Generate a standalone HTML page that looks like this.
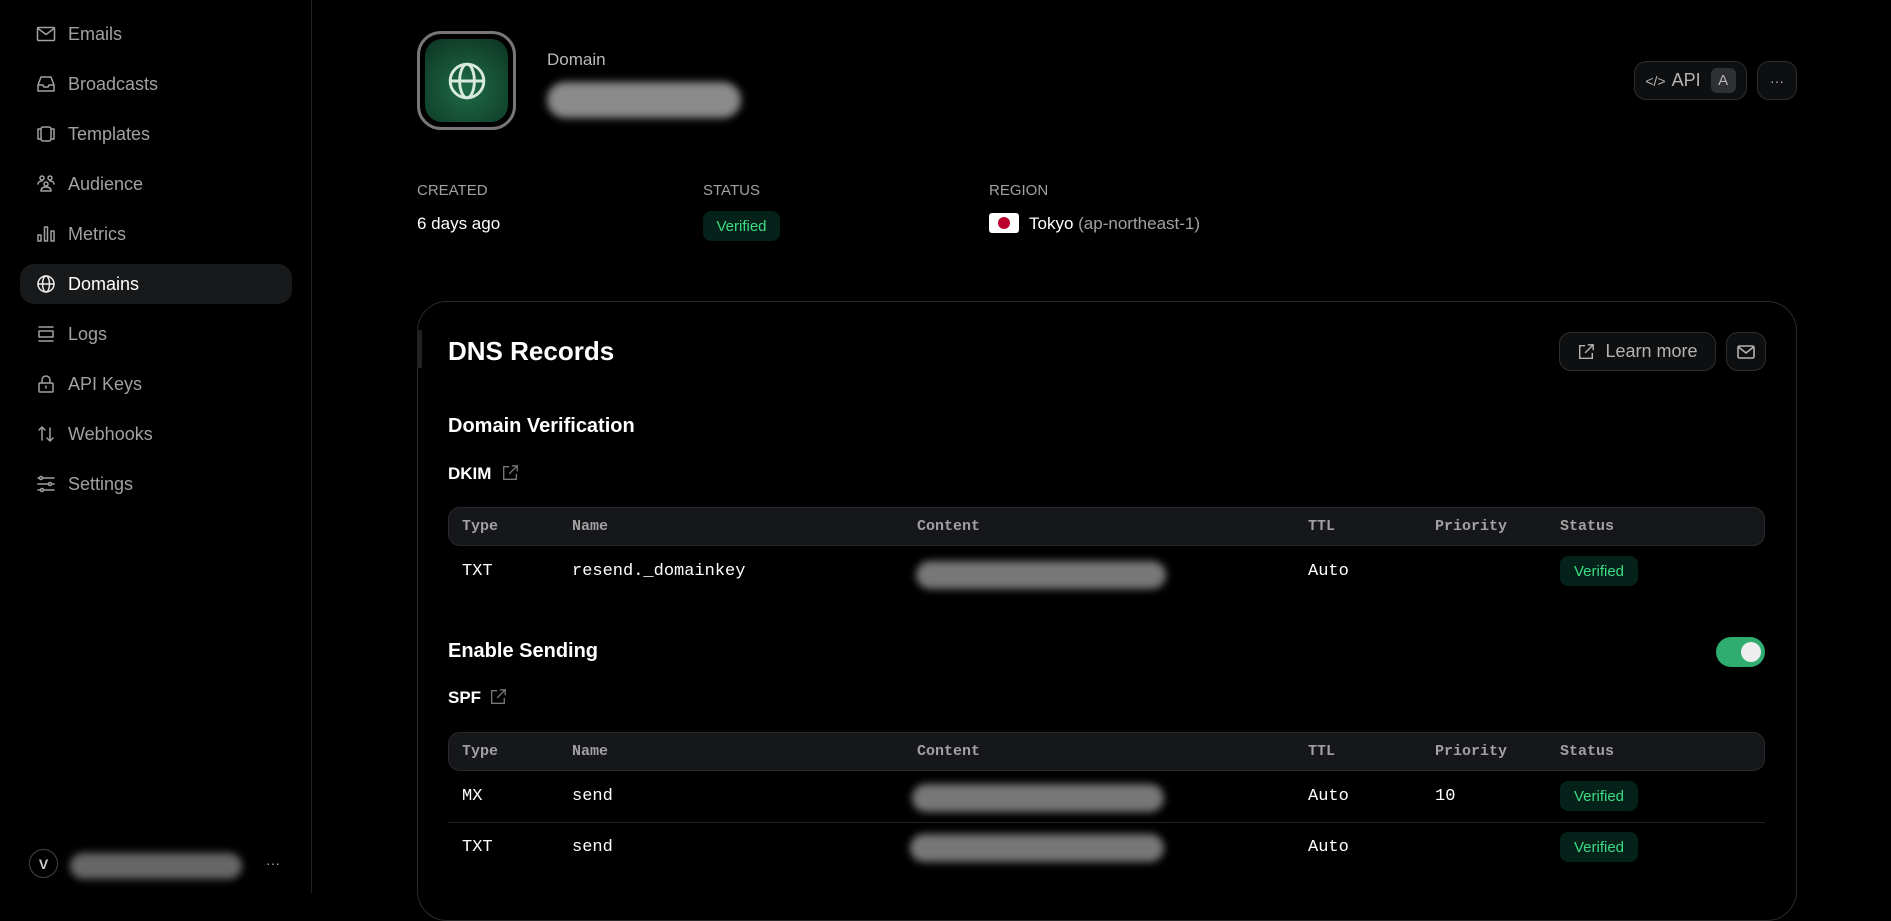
<!DOCTYPE html>
<html><head><meta charset="utf-8"><style>
*{box-sizing:border-box;margin:0;padding:0}
body{width:1891px;height:893px;background:#000;color:#ededed;font-family:"Liberation Sans",sans-serif;position:relative;overflow:hidden}
.a{position:absolute}
.side{left:0;top:0;width:312px;height:893px;border-right:1px solid #222}
.nav{position:absolute;left:20px;width:272px;height:40px;border-radius:14px;display:flex;align-items:center;padding-left:16px;font-size:18px;color:#a1a1a1}
.nav svg{width:20px;height:20px;margin-right:12px;fill:none;stroke:#a1a1a1;stroke-width:1.5;stroke-linecap:round;stroke-linejoin:round}
.nav.act{background:#18191b;color:#fff}
.nav.act svg{stroke:#eee}
.blur{background:#777;border-radius:20px;filter:blur(4px)}
.lbl{font-size:15px;color:#a1a1a1}
.val{font-size:17px;color:#fff}
.badge{background:#04221a;color:#3ddc84;border-radius:8px;font-size:15px;display:flex;align-items:center;justify-content:center}
.btn{border:1px solid #2e2e2e;background:#0e0f11;border-radius:12px;display:flex;align-items:center;justify-content:center;color:#b4b4b4;font-size:18px}
.thead{left:448px;width:1317px;height:39px;background:#16171a;border:1px solid #2a2a2a;border-radius:12px}
.mono{font-family:"Liberation Mono",monospace}
.th{font-size:15px;color:#a1a1a1;font-weight:bold}
.td{font-size:17px;color:#fff}
h3{position:absolute;font-weight:bold;color:#fff}
</style></head><body>
<div class="a side"></div>
<div class="nav" style="top:14px"><svg viewBox="0 0 20 20"><rect x="1.5" y="3.5" width="17" height="13" rx="1"/><path d="M2 4.5l8 6 8-6"/></svg>Emails</div>
<div class="nav" style="top:64px"><svg viewBox="0 0 20 20"><path d="M2 11l3-8h10l3 8v6H2z M2 11h5l1 2h4l1-2h5"/></svg>Broadcasts</div>
<div class="nav" style="top:114px"><svg viewBox="0 0 20 20"><rect x="5" y="3" width="10" height="14" rx="2"/><path d="M5 5H2v10h3M15 5h3v10h-3"/></svg>Templates</div>
<div class="nav" style="top:164px"><svg viewBox="0 0 20 20"><circle cx="6" cy="4" r="2"/><circle cx="14" cy="4" r="2"/><circle cx="10" cy="10" r="2"/><path d="M2 10c0-2 2-3 4-3M18 10c0-2-2-3-4-3M5 17c0-3 2-4 5-4s5 1 5 4z"/></svg>Audience</div>
<div class="nav" style="top:214px"><svg viewBox="0 0 20 20"><rect x="2" y="11" width="3" height="6"/><rect x="8.5" y="3" width="3" height="14"/><rect x="15" y="7" width="3" height="10"/></svg>Metrics</div>
<div class="nav act" style="top:264px"><svg viewBox="0 0 20 20"><circle cx="10" cy="10" r="8"/><ellipse cx="10" cy="10" rx="3.5" ry="8"/><path d="M2 10h16"/></svg>Domains</div>
<div class="nav" style="top:314px"><svg viewBox="0 0 20 20"><path d="M3 3h14M3 17h14"/><rect x="3" y="7" width="14" height="6"/></svg>Logs</div>
<div class="nav" style="top:364px"><svg viewBox="0 0 20 20"><rect x="3" y="9" width="14" height="9" rx="1"/><path d="M6 9V6a4 4 0 018 0v3M10 12v2"/></svg>API Keys</div>
<div class="nav" style="top:414px"><svg viewBox="0 0 20 20"><path d="M6 16V3M3 6l3-3 3 3M14 4v13M11 14l3 3 3-3"/></svg>Webhooks</div>
<div class="nav" style="top:464px"><svg viewBox="0 0 20 20"><path d="M2 4h16M2 10h16M2 16h16"/><circle cx="5" cy="4" r="1.5" fill="#000"/><circle cx="14" cy="10" r="1.5" fill="#000"/><circle cx="6" cy="16" r="1.5" fill="#000"/></svg>Settings</div>
<div class="a" style="left:29px;top:849px;width:29px;height:29px;border:1px solid #444;border-radius:50%;color:#ccc;font-size:14px;font-weight:bold;display:flex;align-items:center;justify-content:center">V</div>
<div class="a blur" style="left:70px;top:853px;width:172px;height:26px;background:#666"></div>
<div class="a" style="left:266px;top:855px;color:#aaa;font-size:14px">···</div>

<div class="a" style="left:417px;top:31px;width:99px;height:99px;border:3px solid #777;border-radius:24px;padding:5px;background:#000">
<div style="width:100%;height:100%;border-radius:17px;background:radial-gradient(circle at 50% 60%,#1f6b47,#0c3322);display:flex;align-items:center;justify-content:center">
<svg width="42" height="42" viewBox="0 0 20 20" fill="none" stroke="#d8eadf" stroke-width="1.4"><circle cx="10" cy="10" r="8"/><ellipse cx="10" cy="10" rx="3.5" ry="8"/><path d="M2 10h16"/></svg></div></div>
<div class="a" style="left:547px;top:50px;font-size:17px;color:#bbb">Domain</div>
<div class="a blur" style="left:547px;top:82px;width:194px;height:36px;background:#8a8a8a"></div>

<div class="a btn" style="left:1634px;top:61px;width:113px;height:39px"><span style="font-size:14px;margin-right:6px">&lt;/&gt;</span>API<span style="margin-left:10px;background:#2e3033;border-radius:6px;width:25px;height:25px;font-size:15px;display:flex;align-items:center;justify-content:center">A</span></div>
<div class="a btn" style="left:1757px;top:61px;width:40px;height:39px;font-size:14px">···</div>

<div class="a lbl" style="left:417px;top:182px">CREATED</div>
<div class="a val" style="left:417px;top:214px">6 days ago</div>
<div class="a lbl" style="left:703px;top:182px">STATUS</div>
<div class="a badge" style="left:703px;top:211px;width:77px;height:30px">Verified</div>
<div class="a lbl" style="left:989px;top:182px">REGION</div>
<div class="a" style="left:989px;top:213px;width:30px;height:20px;background:#fff;border-radius:3px"><div style="position:absolute;left:9px;top:4px;width:12px;height:12px;border-radius:50%;background:#bc002d"></div></div>
<div class="a val" style="left:1029px;top:214px">Tokyo <span style="color:#a1a1a1">(ap-northeast-1)</span></div>

<div class="a" style="left:417px;top:301px;width:1380px;height:620px;border:1px solid #2a2a2a;border-radius:30px"></div>
<div class="a" style="left:417px;top:330px;width:5px;height:38px;background:#222;border-radius:2px"></div>
<h3 style="left:448px;top:336px;font-size:26px">DNS Records</h3>
<div class="a btn" style="left:1559px;top:332px;width:157px;height:39px"><svg width="18" height="18" viewBox="0 0 20 20" fill="none" stroke="#b4b4b4" stroke-width="1.6" style="margin-right:10px"><path d="M9 3H3v14h14v-6M12 2h6v6M18 2l-9 9"/></svg>Learn more</div>
<div class="a btn" style="left:1726px;top:332px;width:40px;height:39px"><svg width="20" height="20" viewBox="0 0 20 20" fill="none" stroke="#b4b4b4" stroke-width="1.6"><rect x="2" y="4" width="16" height="12" rx="1.5"/><path d="M2.5 5l7.5 6 7.5-6"/></svg></div>

<h3 style="left:448px;top:415px;font-size:20px">Domain Verification</h3>
<h3 style="left:448px;top:464px;font-size:17px">DKIM</h3>
<svg class="a" style="left:501px;top:464px" width="18" height="18" viewBox="0 0 20 20" fill="none" stroke="#777" stroke-width="1.5"><path d="M9 3H3v14h14v-6M12 2h6v6M18 2l-9 9"/></svg>
<div class="a thead" style="top:507px"></div>
<div class="a mono th" style="left:462px;top:518px">Type</div><div class="a mono th" style="left:572px;top:518px">Name</div><div class="a mono th" style="left:917px;top:518px">Content</div><div class="a mono th" style="left:1308px;top:518px">TTL</div><div class="a mono th" style="left:1435px;top:518px">Priority</div><div class="a mono th" style="left:1560px;top:518px">Status</div>
<div class="a mono td" style="left:462px;top:562px">TXT</div><div class="a mono td" style="left:572px;top:562px">resend._domainkey</div>
<div class="a blur" style="left:916px;top:561px;width:250px;height:28px"></div>
<div class="a mono td" style="left:1308px;top:562px">Auto</div>
<div class="a badge" style="left:1560px;top:556px;width:78px;height:30px">Verified</div>

<h3 style="left:448px;top:640px;font-size:20px">Enable Sending</h3>
<div class="a" style="left:1716px;top:637px;width:49px;height:30px;background:#2fac6f;border-radius:15px"><div style="position:absolute;right:4px;top:5px;width:20px;height:20px;border-radius:50%;background:#eee"></div></div>
<h3 style="left:448px;top:688px;font-size:17px">SPF</h3>
<svg class="a" style="left:489px;top:688px" width="18" height="18" viewBox="0 0 20 20" fill="none" stroke="#777" stroke-width="1.5"><path d="M9 3H3v14h14v-6M12 2h6v6M18 2l-9 9"/></svg>
<div class="a thead" style="top:732px"></div>
<div class="a mono th" style="left:462px;top:743px">Type</div><div class="a mono th" style="left:572px;top:743px">Name</div><div class="a mono th" style="left:917px;top:743px">Content</div><div class="a mono th" style="left:1308px;top:743px">TTL</div><div class="a mono th" style="left:1435px;top:743px">Priority</div><div class="a mono th" style="left:1560px;top:743px">Status</div>
<div class="a mono td" style="left:462px;top:787px">MX</div><div class="a mono td" style="left:572px;top:787px">send</div>
<div class="a blur" style="left:912px;top:784px;width:252px;height:28px"></div>
<div class="a mono td" style="left:1308px;top:787px">Auto</div><div class="a mono td" style="left:1435px;top:787px">10</div>
<div class="a badge" style="left:1560px;top:781px;width:78px;height:30px">Verified</div>
<div class="a" style="left:448px;top:822px;width:1317px;height:1px;background:#222"></div>
<div class="a mono td" style="left:462px;top:838px">TXT</div><div class="a mono td" style="left:572px;top:838px">send</div>
<div class="a blur" style="left:910px;top:834px;width:254px;height:28px"></div>
<div class="a mono td" style="left:1308px;top:838px">Auto</div>
<div class="a badge" style="left:1560px;top:832px;width:78px;height:30px">Verified</div>
</body></html>
